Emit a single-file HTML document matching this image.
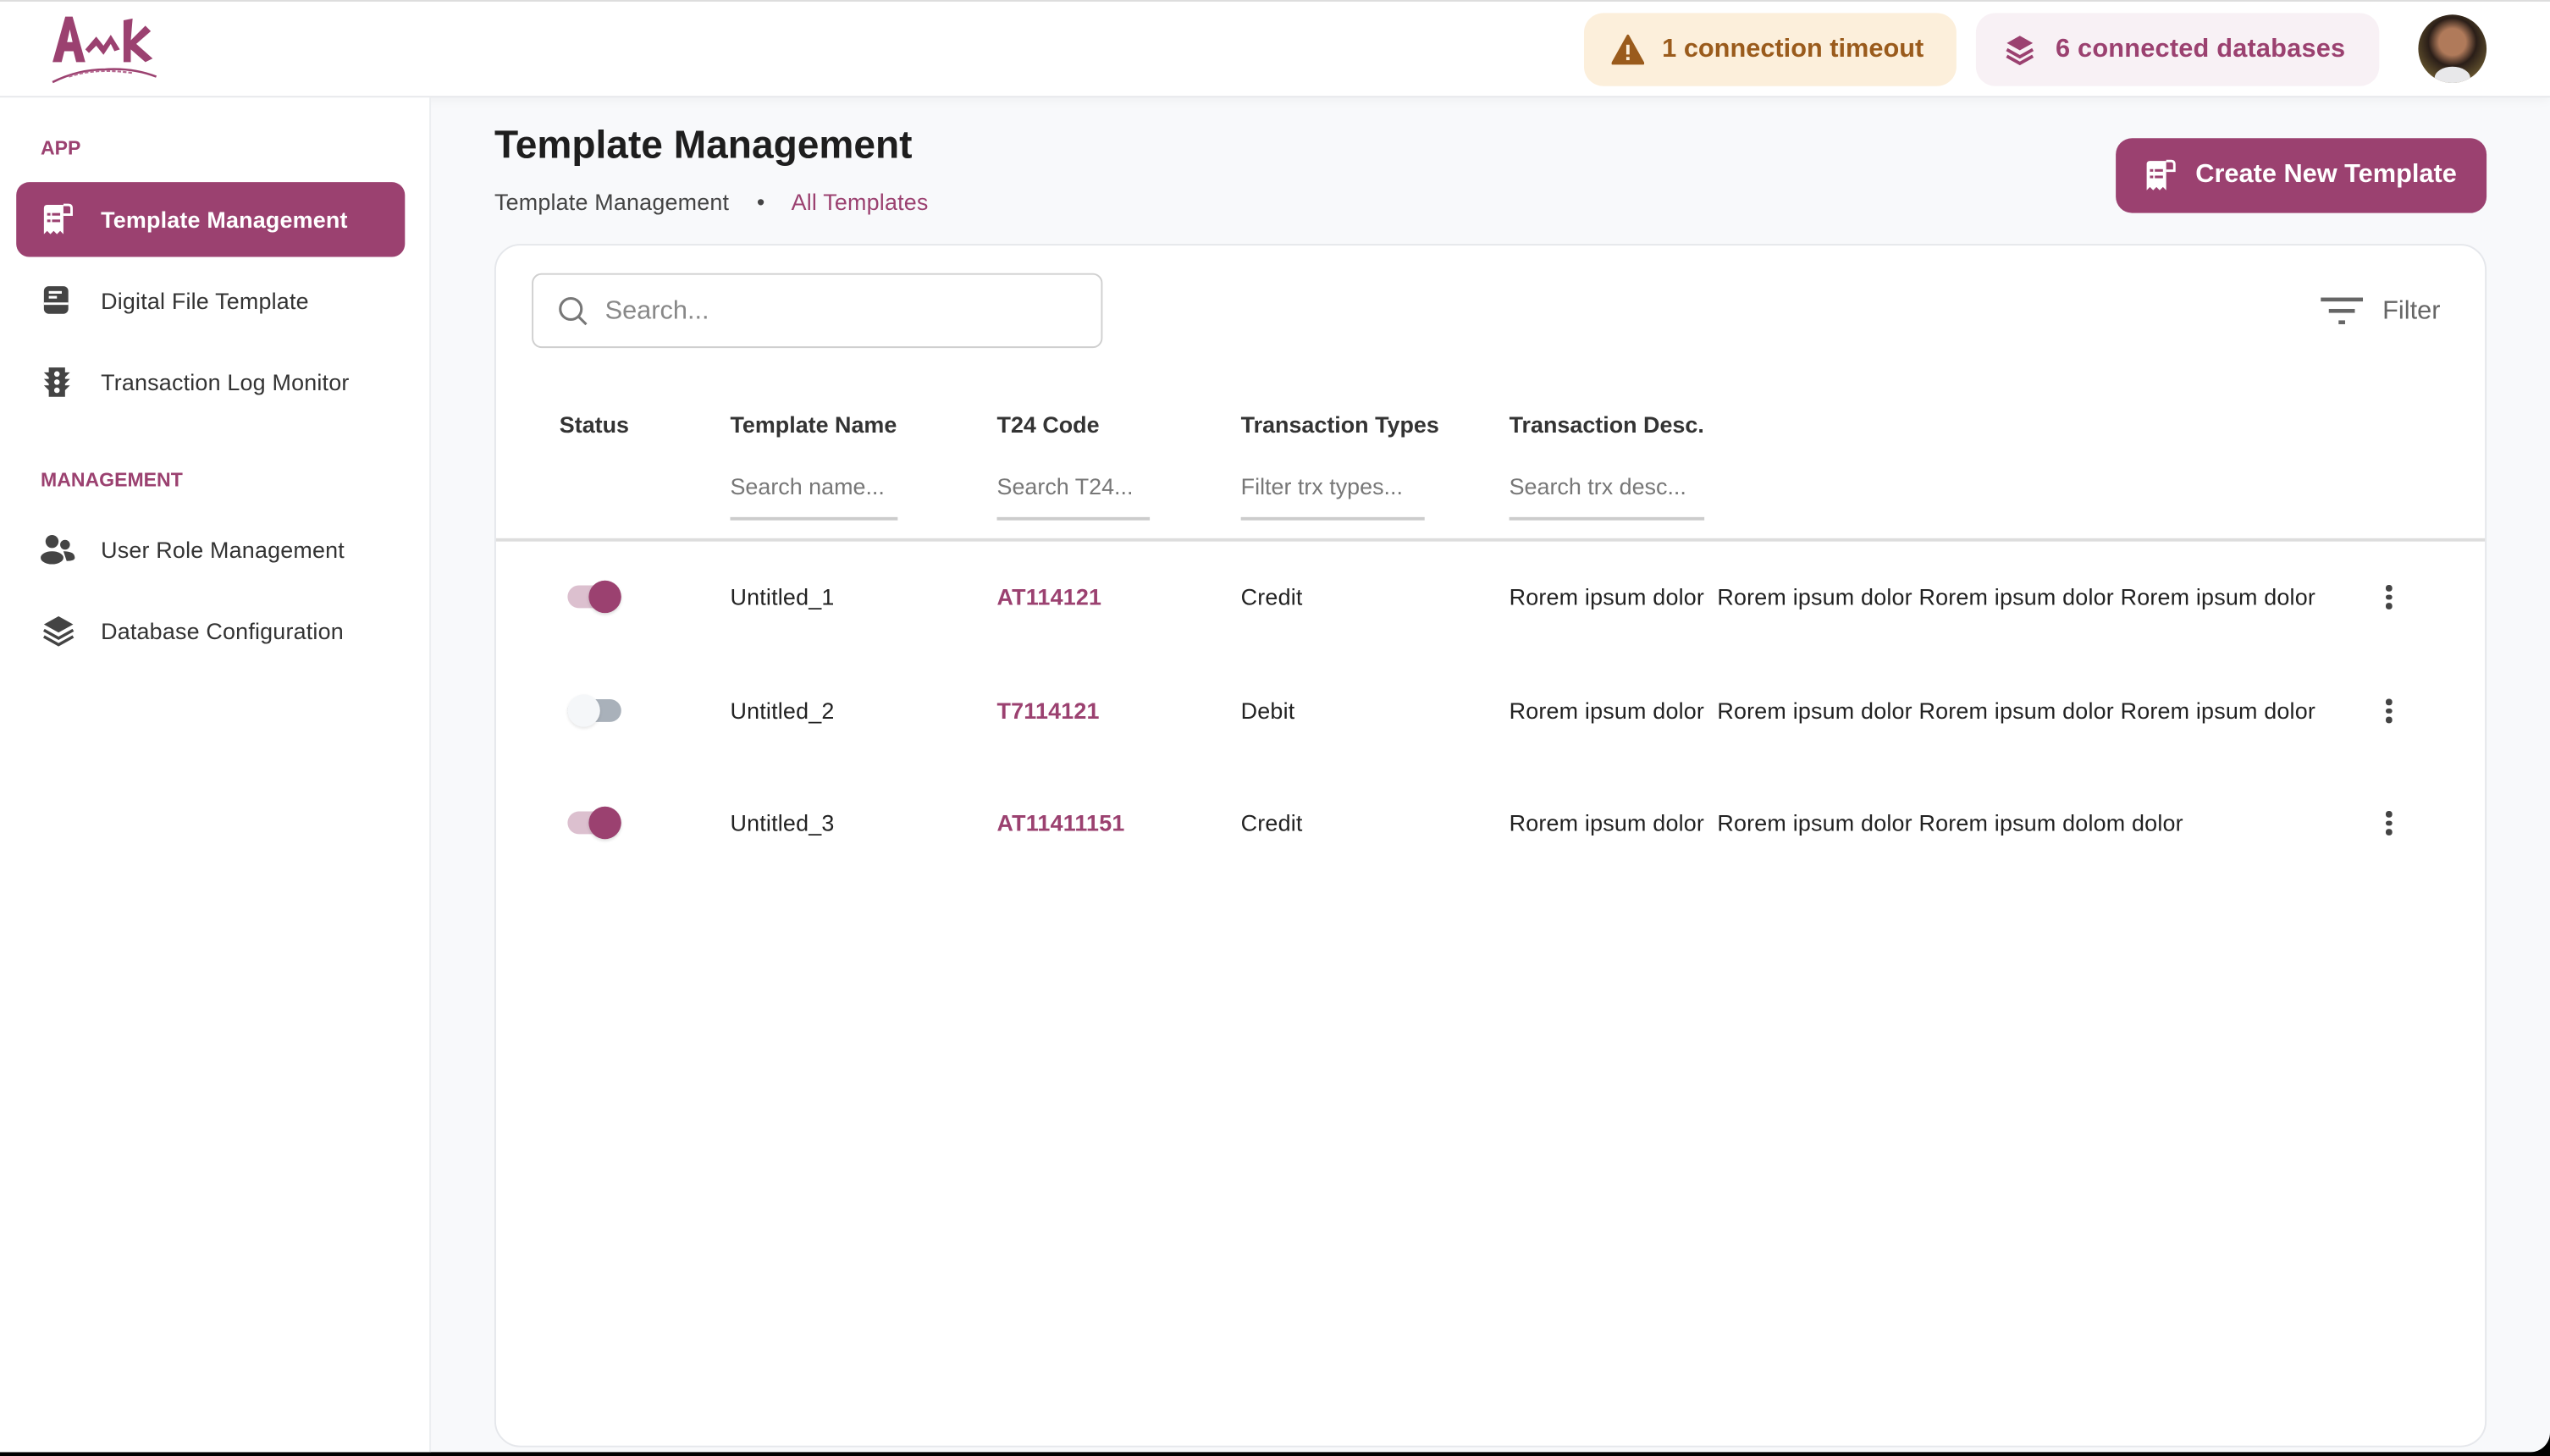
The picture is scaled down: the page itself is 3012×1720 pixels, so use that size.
<!DOCTYPE html>
<html><head><meta charset="utf-8">
<style>
*{box-sizing:border-box;margin:0;padding:0}
html,body{width:3012px;height:1720px;overflow:hidden;background:#000}
#w{position:absolute;left:0;top:0;width:1568px;height:893px;transform:scale(1.92092);transform-origin:0 0;background:#f8f9fb;font-family:"Liberation Sans",Arial,sans-serif;color:#222;border-bottom-right-radius:12px;overflow:hidden}
.a{position:absolute}
.hdr{left:0;top:0;width:1568px;height:60px;background:#fff;border-top:1px solid #ddd;border-bottom:1px solid #e6e7ea;box-shadow:0 2px 6px rgba(0,0,0,.04)}
.pill{top:8px;height:45px;border-radius:12px;display:flex;align-items:center;font-size:16px;font-weight:bold}
.side{left:0;top:60px;width:265px;height:840px;background:#fff;border-right:1px solid #eceef1}
.lbl{font-size:12px;font-weight:bold;color:#9b4170;left:25px}
.it{left:10px;width:239px;height:46px;border-radius:8px;display:flex;align-items:center;font-size:14px;color:#333;letter-spacing:.1px}
.it svg{position:absolute;left:15px}
.it span{position:absolute;left:52px}
.card{left:304px;top:150px;width:1225px;height:740px;background:#fff;border:1px solid #e5e7eb;border-radius:16px}
.th{top:253px;font-size:14px;font-weight:bold;color:#333}
.fi{top:291px;font-size:14px;color:#777;border-bottom:2px solid #ccc;height:29px}
.td{font-size:14px;color:#222;transform:translateY(-50%);letter-spacing:.1px}
.code{color:#9b4170;font-weight:bold}
.tg{left:349px;width:33px;height:14px;border-radius:7px;transform:translateY(-50%)}
.tg i{position:absolute;top:-3px;width:20px;height:20px;border-radius:50%}
.dots{left:1467px;width:4px;transform:translateY(-50%)}
.dots b{display:block;width:3.5px;height:3.5px;border-radius:50%;background:#444;margin:2px 0}
</style></head><body><div id="w">
<div class="a hdr"></div>
<svg class="a" style="left:31px;top:8px" width="72" height="47" viewBox="0 0 64 42">
<g fill="#9b4170"><path d="M8 2 L12 2 L19 27 L14 27 L12.5 21 L7.5 21 L6 27 L1 27 Z M9 16 L12 16 L10.5 9 Z"/>
<path d="M19 20 L25 13 L29 18 L33 12 L38 20 L35 21 L33 17 L29 23 L25 18 L21 22 Z"/>
<path d="M40 4 L45 3 L44 15 L52 7 L55 10 L47 17 L56 25 L52 27 L44 20 L44 27 L40 27 Z"/></g>
<path d="M1 38 Q15 31 30 31 Q45 30 58 35" stroke="#9b4170" stroke-width="1.2" fill="none"/>
<path d="M10 35 Q25 30 45 33" stroke="#b66a92" stroke-width="1" fill="none" stroke-dasharray="2 1"/></svg>
<div class="a pill" style="left:974px;width:229px;background:#fcefdb;color:#9a5b1c">
<svg style="margin-left:17px" width="20" height="19" viewBox="0 0 20 19"><path d="M10 1 L19.5 18 L0.5 18 Z" fill="#9a5b1c" stroke="#9a5b1c" stroke-linejoin="round" stroke-width="1.5"/><rect x="9" y="6.5" width="2" height="6" fill="#fcefdb"/><rect x="9" y="14" width="2" height="2" fill="#fcefdb"/></svg>
<span style="margin-left:11px">1 connection timeout</span></div>
<div class="a pill" style="left:1215px;width:248px;background:#f8f1f5;color:#9b4170">
<svg style="margin-left:17px" width="20" height="20" viewBox="0 0 20 20"><path d="M10 1 L18 5.5 L10 10 L2 5.5 Z" fill="#9b4170"/><path d="M2 9.5 L10 14 L18 9.5 M2 13.5 L10 18 L18 13.5" stroke="#9b4170" stroke-width="2" fill="none"/></svg>
<span style="margin-left:12px;letter-spacing:.1px">6 connected databases</span></div>
<div class="a" style="left:1487px;top:9px;width:42px;height:42px;border-radius:50%;background:radial-gradient(circle at 50% 40%,#b07a5a 0 25%,#2a1e18 45%,#5a4a2a 70%,#a88a4a 100%);overflow:hidden"><div class="a" style="left:10px;top:32px;width:22px;height:14px;background:#e8e8ea;border-radius:50% 50% 0 0"></div></div>

<div class="a side"></div>
<div class="a lbl" style="top:84px">APP</div>
<div class="a it" style="top:112px;background:#9b4170;color:#fff;font-weight:bold"><svg width="20" height="20" viewBox="0 0 20 20"><path d="M2 3 Q2 1 4 1 L14 1 L14 19 L12 17 L10 19 L8 17 L6 19 L4 17 L2 19 Z" fill="#fff"/><path d="M14 1 L17 1 Q19 1 19 3 L19 7 L14 7" fill="none" stroke="#fff" stroke-width="1.5"/><g fill="#9b4170"><rect x="4" y="6" width="2" height="1.6"/><rect x="7" y="6" width="5" height="1.6"/><rect x="4" y="10" width="2" height="1.6"/><rect x="7" y="10" width="5" height="1.6"/></g></svg><span>Template Management</span></div>
<div class="a it" style="top:162px"><svg width="20" height="20" viewBox="0 0 20 20"><rect x="2" y="1" width="15" height="17" rx="3" fill="#444"/><rect x="2" y="11" width="15" height="1.5" fill="#fff"/><rect x="5" y="4" width="8" height="1.6" fill="#fff"/><rect x="5" y="7" width="5" height="1.6" fill="#fff"/></svg><span>Digital File Template</span></div>
<div class="a it" style="top:212px"><svg width="20" height="20" viewBox="0 0 20 20"><path d="M5 1 L15 1 L15 4 L18 4 L15 7 L15 8 L18 8 L15 11 L15 12 L18 12 L15 15 L15 19 L5 19 L5 15 L2 12 L5 12 L5 11 L2 8 L5 8 L5 7 L2 4 L5 4 Z" fill="#444"/><circle cx="10" cy="5" r="1.7" fill="#fff"/><circle cx="10" cy="10" r="1.7" fill="#fff"/><circle cx="10" cy="15" r="1.7" fill="#fff"/></svg><span>Transaction Log Monitor</span></div>
<div class="a lbl" style="top:288px">MANAGEMENT</div>
<div class="a it" style="top:315px"><svg width="22" height="20" viewBox="0 0 22 20"><circle cx="7" cy="5" r="4" fill="#444"/><circle cx="15" cy="7" r="3" fill="#444"/><ellipse cx="7" cy="15" rx="7" ry="4" fill="#444"/><path d="M14 11 Q21 11 21 15 Q21 17 16 17" fill="#444"/></svg><span>User Role Management</span></div>
<div class="a it" style="top:365px"><svg width="22" height="20" viewBox="0 0 22 20"><path d="M11 1 L20 6 L11 11 L2 6 Z" fill="#444"/><path d="M2 9.5 L11 14.5 L20 9.5 M2 13.5 L11 18.5 L20 13.5" stroke="#444" stroke-width="1.8" fill="none"/></svg><span>Database Configuration</span></div>

<div class="a" style="left:304px;top:76px;font-size:24px;font-weight:bold;color:#1e1e1e">Template Management</div>
<div class="a" style="left:304px;top:116px;font-size:14px;color:#444;letter-spacing:.1px">Template Management <span style="margin:0 13px 0 13px">•</span> <span style="color:#9b4170">All Templates</span></div>
<div class="a" style="left:1301px;top:85px;width:228px;height:46px;border-radius:10px;background:#9b4170;color:#fff;font-size:16px;font-weight:bold;display:flex;align-items:center">
<svg style="margin-left:17px" width="20" height="20" viewBox="0 0 20 20"><path d="M2 3 Q2 1 4 1 L14 1 L14 19 L12 17 L10 19 L8 17 L6 19 L4 17 L2 19 Z" fill="#fff"/><path d="M14 1 L17 1 Q19 1 19 3 L19 7 L14 7" fill="none" stroke="#fff" stroke-width="1.5"/><g fill="#9b4170"><rect x="4" y="6" width="2" height="1.6"/><rect x="7" y="6" width="5" height="1.6"/><rect x="4" y="10" width="2" height="1.6"/><rect x="7" y="10" width="5" height="1.6"/></g></svg>
<span style="margin-left:12px">Create New Template</span></div>

<div class="a card"></div>
<div class="a" style="left:327px;top:168px;width:351px;height:46px;border:1px solid #cfcfcf;border-radius:6px"></div>
<svg class="a" style="left:343px;top:182px" width="19" height="19" viewBox="0 0 19 19"><circle cx="8" cy="8" r="6.5" stroke="#777" stroke-width="1.6" fill="none"/><path d="M13 13 L17.5 17.5" stroke="#777" stroke-width="1.6"/></svg>
<div class="a" style="left:372px;top:183px;font-size:16px;color:#888">Search...</div>
<svg class="a" style="left:1427px;top:183px" width="26" height="18" viewBox="0 0 26 18"><rect x="0" y="0" width="26" height="2.4" fill="#666"/><rect x="5" y="7" width="16" height="2.4" fill="#666"/><rect x="11" y="14" width="4" height="2.4" fill="#666"/></svg>
<div class="a" style="left:1465px;top:183px;font-size:16px;color:#666">Filter</div>

<div class="a th" style="left:344px">Status</div>
<div class="a th" style="left:449px">Template Name</div>
<div class="a th" style="left:613px">T24 Code</div>
<div class="a th" style="left:763px">Transaction Types</div>
<div class="a th" style="left:928px">Transaction Desc.</div>
<div class="a fi" style="left:449px;width:103px">Search name...</div>
<div class="a fi" style="left:613px;width:94px">Search T24...</div>
<div class="a fi" style="left:763px;width:113px">Filter trx types...</div>
<div class="a fi" style="left:928px;width:120px">Search trx desc...</div>
<div class="a" style="left:305px;top:331px;width:1223px;height:1.5px;background:#ddd"></div>

<div class="a tg" style="top:367px;background:#dcc0cf"><i style="left:13px;background:#9b4170;box-shadow:0 1px 2px rgba(0,0,0,.15)"></i></div>
<div class="a td" style="left:449px;top:367px">Untitled_1</div>
<div class="a td code" style="left:613px;top:367px">AT114121</div>
<div class="a td" style="left:763px;top:367px">Credit</div>
<div class="a td" style="left:928px;top:367px">Rorem ipsum dolor&nbsp; Rorem ipsum dolor Rorem ipsum dolor Rorem ipsum dolor</div>
<div class="a dots" style="top:367px"><b></b><b></b><b></b></div>

<div class="a tg" style="top:437px;background:#a9b1ba"><i style="left:0;background:#f5f7f9;box-shadow:0 1px 2px rgba(0,0,0,.1)"></i></div>
<div class="a td" style="left:449px;top:437px">Untitled_2</div>
<div class="a td code" style="left:613px;top:437px">T7114121</div>
<div class="a td" style="left:763px;top:437px">Debit</div>
<div class="a td" style="left:928px;top:437px">Rorem ipsum dolor&nbsp; Rorem ipsum dolor Rorem ipsum dolor Rorem ipsum dolor</div>
<div class="a dots" style="top:437px"><b></b><b></b><b></b></div>

<div class="a tg" style="top:506px;background:#dcc0cf"><i style="left:13px;background:#9b4170;box-shadow:0 1px 2px rgba(0,0,0,.15)"></i></div>
<div class="a td" style="left:449px;top:506px">Untitled_3</div>
<div class="a td code" style="left:613px;top:506px">AT11411151</div>
<div class="a td" style="left:763px;top:506px">Credit</div>
<div class="a td" style="left:928px;top:506px">Rorem ipsum dolor&nbsp; Rorem ipsum dolor Rorem ipsum dolom dolor</div>
<div class="a dots" style="top:506px"><b></b><b></b><b></b></div>
</div></body></html>
